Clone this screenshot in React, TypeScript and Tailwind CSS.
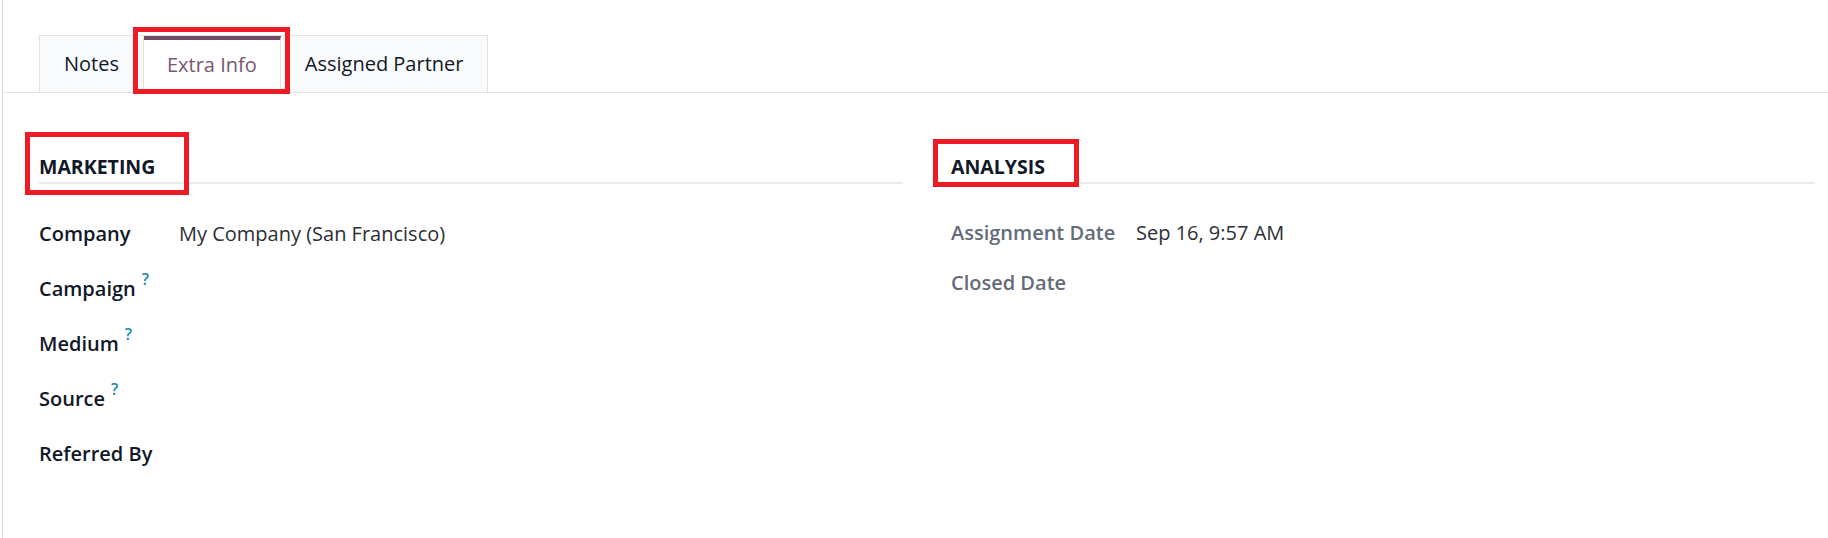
import React from "react";

type Field = { label: string; value?: string; help?: boolean };

const marketing: Field[] = [
  { label: "Company", value: "My Company (San Francisco)" },
  { label: "Campaign", help: true },
  { label: "Medium", help: true },
  { label: "Source", help: true },
  { label: "Referred By" },
];

const analysis: Field[] = [
  { label: "Assignment Date", value: "Sep 16, 9:57 AM" },
  { label: "Closed Date" },
];

function Tab({ label, active }: { label: string; active?: boolean }) {
  if (active) {
    return (
      <div className="-mb-px flex h-[57px] items-center border-r border-t-[4px] border-r-[#dee2e6] border-t-[#714b67] bg-white px-[23px] pb-[3px] text-[20px] text-[#7b5571]">
        {label}
      </div>
    );
  }
  return (
    <div className="flex h-[56px] items-center border-r border-[#dee2e6] bg-[#f9fafb] px-[24px] text-[20px] text-[#111827]">
      {label}
    </div>
  );
}

function SectionTitle({ children }: { children: React.ReactNode }) {
  return (
    <div className="border-b-2 border-[#e9eaec] pb-[2px] text-[19.5px] font-bold uppercase leading-[26px] text-[#111827]">
      {children}
    </div>
  );
}

export default function App() {
  return (
    <div className="relative h-[538px] w-full overflow-hidden bg-white font-['Open_Sans',sans-serif]">
      <div className="ml-[2px] h-full border-l border-[#d8dadd] pt-[35px]">
        {/* Tabs */}
        <div className="flex border-b border-[#dee2e6] pl-[36px]">
          <div className="flex border-l border-t border-[#dee2e6]">
            <Tab label="Notes" />
            <Tab label="Extra Info" active />
            <Tab label="Assigned Partner" />
          </div>
        </div>

        {/* Extra Info content */}
        <div className="grid grid-cols-2 gap-x-[48px] pl-[36px] pr-[13px] pt-[61px]">
          <div>
            <SectionTitle>Marketing</SectionTitle>
            <div className="mt-[22px]">
              {marketing.map((f) => (
                <div key={f.label} className="grid h-[55px] grid-cols-[140px_1fr] items-center text-[20px] leading-[30px]">
                  <div className="font-semibold text-[#111827]">
                    {f.label}
                    {f.help && (
                      <sup className="-top-[11px] ml-[6px] text-[16px] font-semibold text-[#1a87ad]">?</sup>
                    )}
                  </div>
                  <div className="text-[#2b2f36]">{f.value}</div>
                </div>
              ))}
            </div>
          </div>
          <div>
            <SectionTitle>Analysis</SectionTitle>
            <div className="mt-[24px]">
              {analysis.map((f) => (
                <div key={f.label} className="grid h-[50px] grid-cols-[185px_1fr] items-center text-[20px] leading-[30px]">
                  <div className="font-semibold text-[#646b78]">{f.label}</div>
                  <div className="text-[#2b2f36]">{f.value}</div>
                </div>
              ))}
            </div>
          </div>
        </div>
      </div>

      {/* red highlight boxes */}
      <div className="absolute left-[133px] top-[27px] h-[67px] w-[157px] border-[5px] border-[#ed1c24]" />
      <div className="absolute left-[25px] top-[132px] h-[63px] w-[164px] border-[5px] border-[#ed1c24]" />
      <div className="absolute left-[933px] top-[139px] h-[48px] w-[146px] border-[5px] border-[#ed1c24]" />
    </div>
  );
}
